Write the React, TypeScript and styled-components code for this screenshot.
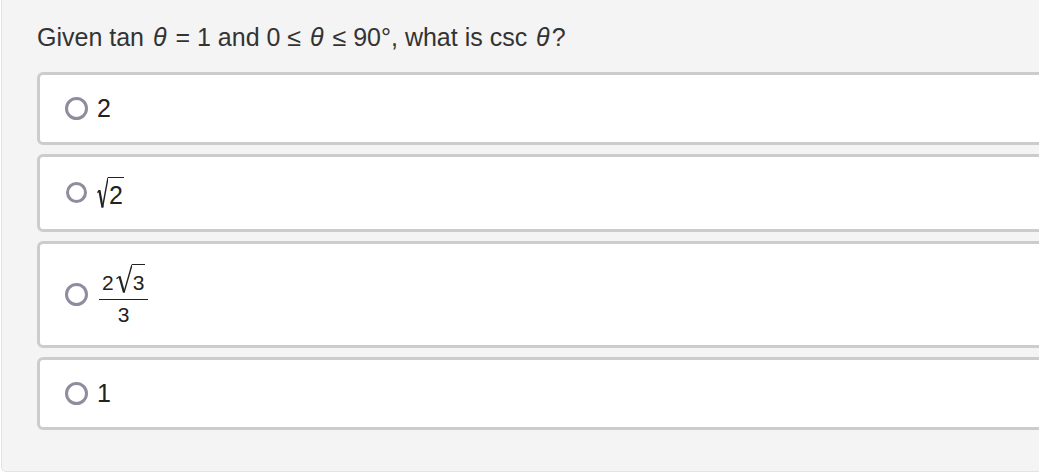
import React from "react";
import styled, { createGlobalStyle } from "styled-components";

const GlobalStyle = createGlobalStyle`
  html, body { margin: 0; padding: 0; background: #ffffff; overflow: hidden; }
  body { font-family: "Liberation Sans", Arial, sans-serif; color: #333333; }
`;

const Panel = styled.div`
  width: 1100px;
  margin-left: 1px;
  padding: 23px 0 41px 35px;
  box-sizing: border-box;
  background: #f4f4f4;
  border: 1px solid #e3e3e3;
  border-top: none;
  border-right: none;
  border-radius: 0 0 0 5px;
`;

const Question = styled.div`
  font-size: 25px;
  line-height: 28px;
  color: #333333;
  margin-bottom: 21px;
  white-space: nowrap;
`;

const Var = styled.i`
  font-style: italic;
  padding: 0 2px;
`;

const Options = styled.div`
  display: flex;
  flex-direction: column;
  gap: 9px;
`;

const Card = styled.label`
  display: flex;
  align-items: center;
  gap: 9px;
  padding: 20px 25px;
  background: #ffffff;
  border: 3px solid #cccccc;
  border-radius: 6px;
  cursor: pointer;
`;

const Radio = styled.span<{ $size: number }>`
  flex: none;
  box-sizing: border-box;
  width: ${(p) => p.$size}px;
  height: ${(p) => p.$size}px;
  margin: 0 ${(p) => (23 - p.$size) / 2}px;
  border: 3px solid #8f8c9e;
  border-radius: 50%;
`;

const Answer = styled.span`
  font-size: 25px;
  line-height: 27px;
  color: #222222;
  display: inline-flex;
  align-items: center;
`;

const Root = styled.span<{ $size: number }>`
  display: inline-flex;
  align-items: flex-start;
  font-size: ${(p) => p.$size}px;
`;

const RootBody = styled.span<{ $gap: number }>`
  display: inline-block;
  line-height: 1;
  border-top: 1.5px solid #222222;
  padding: ${(p) => p.$gap}px 1px 0 1px;
`;

const Frac = styled.span`
  display: inline-flex;
  flex-direction: column;
  align-items: center;
  font-size: 21px;
  line-height: 1;
  margin-left: 2px;
`;

const Num = styled.span`
  display: inline-flex;
  align-items: flex-end;
  padding: 0 3px 6px;
`;

const Spacer = styled.span`
  width: 2px;
`;

const Den = styled.span`
  align-self: stretch;
  text-align: center;
  border-top: 1.5px solid #222222;
  padding-top: 4px;
`;

const RadicalSign = ({ width, height }: { width: number; height: number }) => (
  <svg
    width={width}
    height={height}
    viewBox={`0 0 ${width} ${height}`}
    style={{ display: "block", flex: "none" }}
  >
    <path
      d={`M0.5 ${height * 0.5} L${width * 0.22} ${height * 0.42}`}
      stroke="#222222"
      strokeWidth={1.3}
      fill="none"
    />
    <path
      d={`M${width * 0.22} ${height * 0.42} L${width * 0.5} ${height - 1}`}
      stroke="#222222"
      strokeWidth={2.2}
      fill="none"
    />
    <path
      d={`M${width * 0.5} ${height - 1} L${width} 0.75`}
      stroke="#222222"
      strokeWidth={1.4}
      fill="none"
    />
  </svg>
);

const Sqrt = ({
  children,
  size,
  gap,
  signWidth,
}: {
  children: React.ReactNode;
  size: number;
  gap: number;
  signWidth: number;
}) => (
  <Root $size={size}>
    <RadicalSign width={signWidth} height={size + gap + 1.5} />
    <RootBody $gap={gap}>{children}</RootBody>
  </Root>
);

const options: { radio: number; body: React.ReactNode }[] = [
  { radio: 23, body: "2" },
  {
    radio: 21,
    body: (
      <Sqrt size={25} gap={5} signWidth={11}>
        2
      </Sqrt>
    ),
  },
  {
    radio: 23,
    body: (
      <Frac>
        <Num>
          2
          <Spacer />
          <Sqrt size={21} gap={7} signWidth={16}>
            3
          </Sqrt>
        </Num>
        <Den>3</Den>
      </Frac>
    ),
  },
  { radio: 23, body: "1" },
];

export default function App() {
  return (
    <>
      <GlobalStyle />
      <Panel>
        <Question>
          Given tan <Var>θ</Var> = 1 and 0 ≤ <Var>θ</Var> ≤ 90°, what is csc <Var>θ</Var>?
        </Question>
        <Options>
          {options.map((opt, i) => (
            <Card key={i}>
              <Radio $size={opt.radio} />
              <Answer>{opt.body}</Answer>
            </Card>
          ))}
        </Options>
      </Panel>
    </>
  );
}
